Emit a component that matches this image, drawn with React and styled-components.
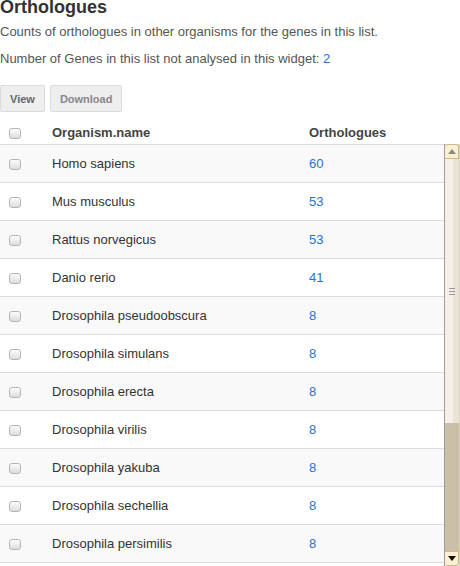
import styled, { createGlobalStyle } from 'styled-components';

const GlobalStyle = createGlobalStyle`
  html, body {
    margin: 0;
    padding: 0;
    background: #fff;
  }
  body {
    font-family: "Liberation Sans", Arial, sans-serif;
    font-size: 13px;
    color: #333;
  }
`;

const Widget = styled.div`
  width: 460px;
  height: 566px;
  overflow: hidden;
  display: flex;
  flex-direction: column;
`;

const Title = styled.h2`
  margin: -2px 0 0;
  font-size: 18px;
  line-height: 18px;
  font-weight: bold;
  color: #333;
  height: 19px;
`;

const Description = styled.p`
  margin: 6px 0 0;
  line-height: 18px;
  color: #555;
`;

const NotAnalysed = styled.p`
  margin: 9px 0 0;
  line-height: 18px;
  color: #555;
`;

const Link = styled.a`
  color: #2a6fdb;
  text-decoration: none;
`;

const Toolbar = styled.div`
  display: flex;
  gap: 5px;
  margin-top: 17px;
`;

const Button = styled.button`
  font-family: inherit;
  font-size: 11px;
  font-weight: bold;
  height: 27px;
  padding: 0 9px;
  background: #eee;
  border: 1px solid #dcdcdc;
  border-radius: 2px;
  color: ${(props) => (props.$muted ? '#888' : '#666')};
  cursor: pointer;
`;

const Row = styled.div`
  display: grid;
  grid-template-columns: 52px 257px 1fr;
  align-items: center;
  box-sizing: border-box;
  height: ${(props) => (props.$header ? '30px' : '38px')};
  margin-top: ${(props) => (props.$header ? '2px' : '0')};
  padding-top: ${(props) => (props.$header ? '6px' : '0')};
  background: ${(props) => (props.$odd ? '#f9f9f9' : '#fff')};
  border-bottom: ${(props) => (props.$header ? 'none' : '1px solid #ddd')};
`;

const HeaderCell = styled.div`
  font-weight: bold;
  color: #444;
`;

const Cell = styled.div`
  color: #333;
`;

const Count = styled.a`
  color: #2a6fdb;
  text-decoration: none;
`;

const Check = styled.input.attrs({ type: 'checkbox' })`
  appearance: none;
  margin: 0 0 0 9px;
  width: 12px;
  height: 11px;
  border: 1px solid #b5b5b5;
  border-radius: 3px;
  background: linear-gradient(#fdfdfd, #dcdcdc);
  box-sizing: border-box;
  display: block;
  position: relative;
  top: 1px;
`;

const Body = styled.div`
  display: flex;
  flex: 1;
  min-height: 0;
  border-top: 1px solid #ddd;
`;

const Rows = styled.div`
  flex: 1;
  overflow: hidden;
`;

const Scrollbar = styled.div`
  width: 14px;
  display: flex;
  flex-direction: column;
  border-left: 1px solid #9d9d9d;
  border-right: 1px solid #d9d2c2;
  margin-top: -1px;
`;

const ArrowButton = styled.div`
  height: 13px;
  background: #fdefcf;
  border: 1px solid #c8b98f;
  border-left: none;
  border-radius: ${(props) => (props.$down ? '0 0 3px 3px' : '3px 3px 0 0')};
  display: flex;
  align-items: center;
  justify-content: center;
`;

const Thumb = styled.div`
  height: 264px;
  background: linear-gradient(90deg, #f4efe7 60%, #e9e3d8 60%);
  border-bottom: 1px solid #c9c0aa;
  display: flex;
  flex-direction: column;
  align-items: center;
  justify-content: center;
  gap: 2px;
`;

const Grip = styled.span`
  display: block;
  width: 6px;
  height: 1px;
  background: #999;
`;

const Track = styled.div`
  flex: 1;
  background: #cbc0a7;
`;

const organisms = [
  ['Homo sapiens', 60],
  ['Mus musculus', 53],
  ['Rattus norvegicus', 53],
  ['Danio rerio', 41],
  ['Drosophila pseudoobscura', 8],
  ['Drosophila simulans', 8],
  ['Drosophila erecta', 8],
  ['Drosophila virilis', 8],
  ['Drosophila yakuba', 8],
  ['Drosophila sechellia', 8],
  ['Drosophila persimilis', 8],
];

const Arrow = ({ down }) => (
  <svg width="8" height="5" viewBox="0 0 8 5">
    {down ? (
      <polygon points="0,0 8,0 4,5" fill="#111" />
    ) : (
      <polygon points="0,5 8,5 4,0" fill="#8a8a8a" />
    )}
  </svg>
);

const App = () => {
  return (
    <>
      <GlobalStyle />
      <Widget>
        <Title>Orthologues</Title>
        <Description>Counts of orthologues in other organisms for the genes in this list.</Description>
        <NotAnalysed>
          Number of Genes in this list not analysed in this widget: <Link href="#">2</Link>
        </NotAnalysed>
        <Toolbar>
          <Button>View</Button>
          <Button $muted>Download</Button>
        </Toolbar>
        <Row $header>
          <Check />
          <HeaderCell>Organism.name</HeaderCell>
          <HeaderCell>Orthologues</HeaderCell>
        </Row>
        <Body>
          <Rows>
            {organisms.map(([name, count], i) => (
              <Row key={name} $odd={i % 2 === 0}>
                <Check />
                <Cell>{name}</Cell>
                <Cell>
                  <Count href="#">{count}</Count>
                </Cell>
              </Row>
            ))}
          </Rows>
          <Scrollbar>
            <ArrowButton>
              <Arrow />
            </ArrowButton>
            <Thumb>
              <Grip />
              <Grip />
              <Grip />
            </Thumb>
            <Track />
            <ArrowButton $down>
              <Arrow down />
            </ArrowButton>
          </Scrollbar>
        </Body>
      </Widget>
    </>
  );
};

export default App;
